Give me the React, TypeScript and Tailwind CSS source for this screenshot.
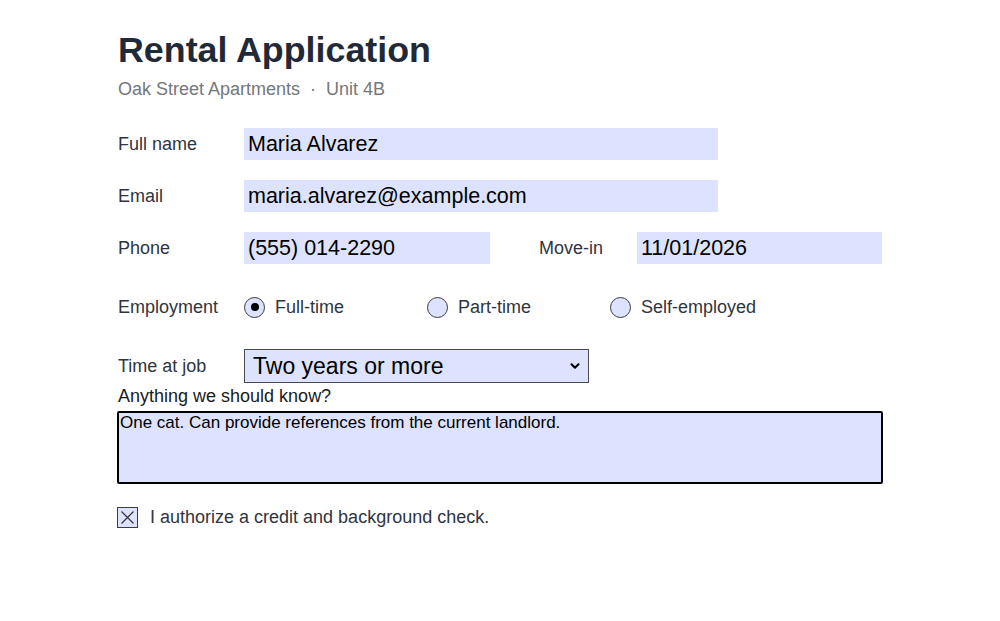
import { ChevronDown } from "lucide-react";

const field = "bg-[#dde3fe] text-black text-[21.5px] h-[32px] leading-[32px] px-[4px] outline-none";

function Row({ label, children }: { label: string; children: React.ReactNode }) {
  return (
    <div className="flex items-center h-[32px]">
      <label className="w-[126px] shrink-0 text-[18px] text-[#2f3540]">{label}</label>
      {children}
    </div>
  );
}

function Radio({ label, checked }: { label: string; checked?: boolean }) {
  return (
    <label className="w-[183px] flex items-center gap-[10px] text-[18px] text-[#2f3540]">
      <span className="w-[21px] h-[21px] rounded-full border-[1.5px] border-[#3b3b3b] bg-[#dde3fe] flex items-center justify-center">
        {checked && <span className="w-[8px] h-[8px] rounded-full bg-black" />}
      </span>
      {label}
    </label>
  );
}

export default function App() {
  return (
    <div className="w-[1000px] h-[621px] bg-white pl-[118px] pt-[30px] font-['Liberation_Sans',Arial,sans-serif]">
      <h1 className="text-[35.8px] leading-[40px] font-bold text-[#1f2937]">Rental Application</h1>
      <p className="mt-[8px] text-[18px] leading-[22px] text-[#74777c]">
        Oak Street Apartments <span className="mx-[5px]">·</span> Unit 4B
      </p>

      <div className="mt-[28px] flex flex-col gap-[20px]">
        <Row label="Full name">
          <div className={`${field} w-[474px]`}>Maria Alvarez</div>
        </Row>
        <Row label="Email">
          <div className={`${field} w-[474px]`}>maria.alvarez@example.com</div>
        </Row>
        <Row label="Phone">
          <div className={`${field} w-[246px]`}>(555) 014-2290</div>
          <label className="ml-[49px] w-[98px] text-[18px] text-[#2f3540]">Move-in</label>
          <div className={`${field} w-[245px]`}>11/01/2026</div>
        </Row>
      </div>

      <div className="mt-[27px]">
        <Row label="Employment">
          <Radio label="Full-time" checked />
          <Radio label="Part-time" />
          <Radio label="Self-employed" />
        </Row>
      </div>

      <div className="mt-[26px] flex items-center h-[34px]">
        <label className="w-[126px] shrink-0 text-[18px] text-[#2f3540]">Time at job</label>
        <div className="w-[345px] h-[34px] border border-[#4a4a4a] bg-[#dde3fe] flex items-center justify-between pl-[8px] pr-[6px]">
          <span className="text-[23px] text-black">Two years or more</span>
          <ChevronDown className="w-[14px] h-[14px] text-black" strokeWidth={3.5} />
        </div>
      </div>

      <p className="mt-[3px] text-[18px] leading-[20px] text-[#1a1a1a]">Anything we should know?</p>
      <div className="mt-[5px] w-[766px] h-[73px] -ml-[1px] border-2 border-black rounded-[2px] bg-[#dde3fe] px-[1px] text-[17px] leading-[20px] text-black">
        One cat. Can provide references from the current landlord.
      </div>

      <div className="mt-[20px] -ml-[1px] flex items-center gap-[12px]">
        <span className="w-[21px] h-[21px] border border-[#3b3b3b] bg-[#dde3fe] flex items-center justify-center">
          <svg width="15" height="15" viewBox="0 0 15 15">
            <path d="M1.5 1.5 L13.5 13.5 M13.5 1.5 L1.5 13.5" stroke="#333" strokeWidth="1.2" />
          </svg>
        </span>
        <span className="text-[18px] text-[#2f3540]">I authorize a credit and background check.</span>
      </div>
    </div>
  );
}
